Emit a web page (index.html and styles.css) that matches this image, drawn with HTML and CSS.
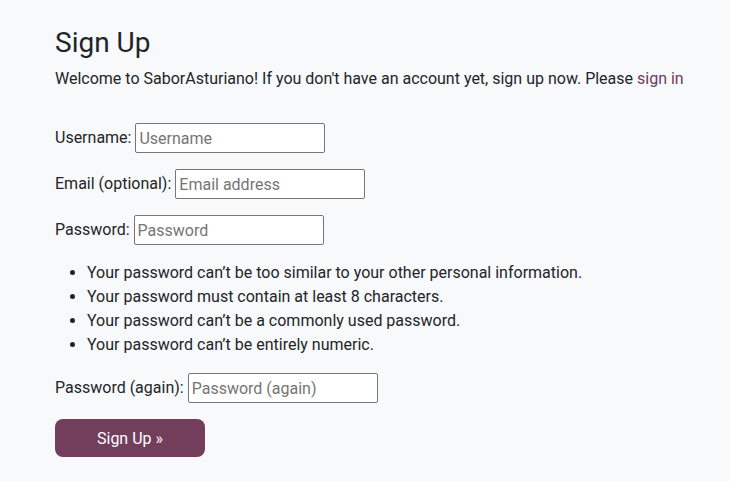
FILE: index.html
```html
<!DOCTYPE html>
<html lang="en">
<head>
<meta charset="utf-8">
<title>Sign Up</title>
<link rel="stylesheet" href="styles.css">
</head>
<body>
<main class="container">
  <h1 class="title">Sign Up</h1>
  <p class="intro">Welcome to SaborAsturiano! If you don't have an account yet, sign up now. Please <a href="#" class="link">sign in</a></p>
  <form class="signup">
    <p class="row"><label for="u">Username:</label> <input id="u" class="field" type="text" placeholder="Username"></p>
    <p class="row"><label for="e">Email (optional):</label> <input id="e" class="field" type="email" placeholder="Email address"></p>
    <p class="row"><label for="p1">Password:</label> <input id="p1" class="field" type="password" placeholder="Password"></p>
    <ul class="help">
      <li>Your password can’t be too similar to your other personal information.</li>
      <li>Your password must contain at least 8 characters.</li>
      <li>Your password can’t be a commonly used password.</li>
      <li>Your password can’t be entirely numeric.</li>
    </ul>
    <p class="row"><label for="p2">Password (again):</label> <input id="p2" class="field" type="password" placeholder="Password (again)"></p>
    <button type="submit" class="btn">Sign Up &raquo;</button>
  </form>
</main>
</body>
</html>
```
FILE: styles.css
```css
html, body {
  margin: 0;
  padding: 0;
}
body {
  background: #f8f9fa;
  color: #212529;
  font-family: Roboto, "Liberation Sans", sans-serif;
  font-size: 16px;
  line-height: 24px;
}
.container {
  padding: 26px 20px 0 55px;
}
.title {
  font-size: 28px;
  font-weight: 400;
  line-height: 34px;
  margin: 0 0 7px;
}
.intro {
  margin: 0 0 32px;
  white-space: nowrap;
}
.link {
  color: #6f3c5c;
  text-decoration: none;
}
.row {
  margin: 0 0 16px;
  height: 30px;
  display: flex;
  align-items: center;
  gap: 4px;
}
.field {
  box-sizing: border-box;
  width: 190px;
  height: 30px;
  border: 1px solid #767676;
  border-radius: 2px;
  background: #fff;
  padding: 1px 3px;
  font-family: Roboto, "Liberation Sans", sans-serif;
  font-size: 16px;
  color: #212529;
}
.field::placeholder {
  color: #757575;
}
.help {
  margin: 0 0 16px;
  padding-left: 32px;
}
.btn {
  display: block;
  width: 150px;
  height: 38px;
  border: 0;
  border-radius: 8px;
  background: #733d5c;
  color: #fff;
  font-family: Roboto, "Liberation Sans", sans-serif;
  font-size: 16px;
  cursor: pointer;
}
```
